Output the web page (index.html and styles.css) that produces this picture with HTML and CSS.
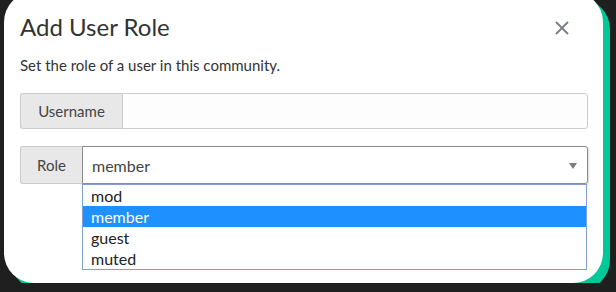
FILE: index.html
```html
<!DOCTYPE html>
<html lang="en">
<head>
    <meta charset="UTF-8">
    <meta name="viewport" content="width=device-width, initial-scale=1.0">
    <title>Add User Role</title>
    <link rel="stylesheet" href="styles.css">
</head>
<body>
    <div class="modal">
        <div class="modal-header">
            <h1>Add User Role</h1>
            <span class="close">
                <svg width="14" height="14" viewBox="0 0 14 14">
                    <path d="M1 1 L13 13 M13 1 L1 13" stroke="#7b8189" stroke-width="2" fill="none"/>
                </svg>
            </span>
        </div>
        <p class="subtitle">Set the role of a user in this community.</p>

        <div class="input-group">
            <span class="addon addon-user">Username</span>
            <input type="text" class="field">
        </div>

        <div class="input-group role">
            <span class="addon addon-role">Role</span>
            <div class="select">
                <span>member</span>
                <span class="arrow"></span>
            </div>
            <!-- lista aberta do select -->
            <ul class="options">
                <li>mod</li>
                <li class="selected">member</li>
                <li>guest</li>
                <li>muted</li>
            </ul>
        </div>
    </div>
</body>
</html>
```

FILE: styles.css
```css
body {
    margin: 0;
    padding: 0;
    background-color: #1f1f1f;
    font-family: Lato, "Liberation Sans", sans-serif;
    color: #333;
    overflow: hidden;
}

.modal {
    box-sizing: border-box;
    width: 599px;
    height: 291px;
    margin: -8px 0 0 4px;
    padding: 20px 15px 0 16px;
    background-color: #fff;
    border-radius: 30px;
    box-shadow: 7px 7px 0 #00c896;
}

.modal-header {
    display: flex;
    justify-content: space-between;
    align-items: center;
}

.modal-header h1 {
    margin: 0;
    font-size: 24px;
    font-weight: normal;
    line-height: 30px;
    color: #333;
}

.close {
    display: flex;
    margin-right: 19px;
    margin-top: 2px;
}

.subtitle {
    margin: 14px 0 0 0;
    font-size: 15px;
    line-height: 18px;
    color: #333;
}

.input-group {
    display: flex;
    height: 36px;
    margin-top: 19px;
    width: 568px;
}

.addon {
    box-sizing: border-box;
    display: flex;
    align-items: center;
    justify-content: center;
    background-color: #e8e8e8;
    border: 1px solid #cbcbcb;
    border-right: none;
    border-radius: 3px 0 0 3px;
    font-size: 15px;
    color: #444;
}

.addon-user {
    width: 102px;
}

.field {
    flex: 1;
    box-sizing: border-box;
    border: 1px solid #cbcbcb;
    border-radius: 0 3px 3px 0;
    background-color: #fdfdfd;
    margin: 0;
}

.role {
    position: relative;
    height: 38px;
    margin-top: 17px;
}

.addon-role {
    width: 62px;
}

.select {
    flex: 1;
    box-sizing: border-box;
    display: flex;
    align-items: center;
    justify-content: space-between;
    padding: 0 9px;
    border: 1px solid #8c8c8c;
    border-radius: 0 3px 3px 0;
    box-shadow: 1px 1px 2px rgba(0, 0, 0, 0.15);
    background-color: #fff;
    font-size: 16px;
    color: #444;
}

.arrow {
    width: 0;
    height: 0;
    border-left: 4px solid transparent;
    border-right: 4px solid transparent;
    border-top: 6px solid #7c7c7c;
    margin-top: 2px;
    margin-right: 1px;
}

.options {
    position: absolute;
    top: 38px;
    left: 62px;
    width: 505px;
    box-sizing: border-box;
    margin: 0;
    padding: 0;
    list-style: none;
    background-color: #fff;
    border: 1px solid #7f9fd6;
    font-size: 16px;
}

.options li {
    height: 21px;
    line-height: 21px;
    padding-left: 8px;
    color: #222;
}

.options li.selected {
    background-color: #1e90ff;
    color: #fff;
}
```
